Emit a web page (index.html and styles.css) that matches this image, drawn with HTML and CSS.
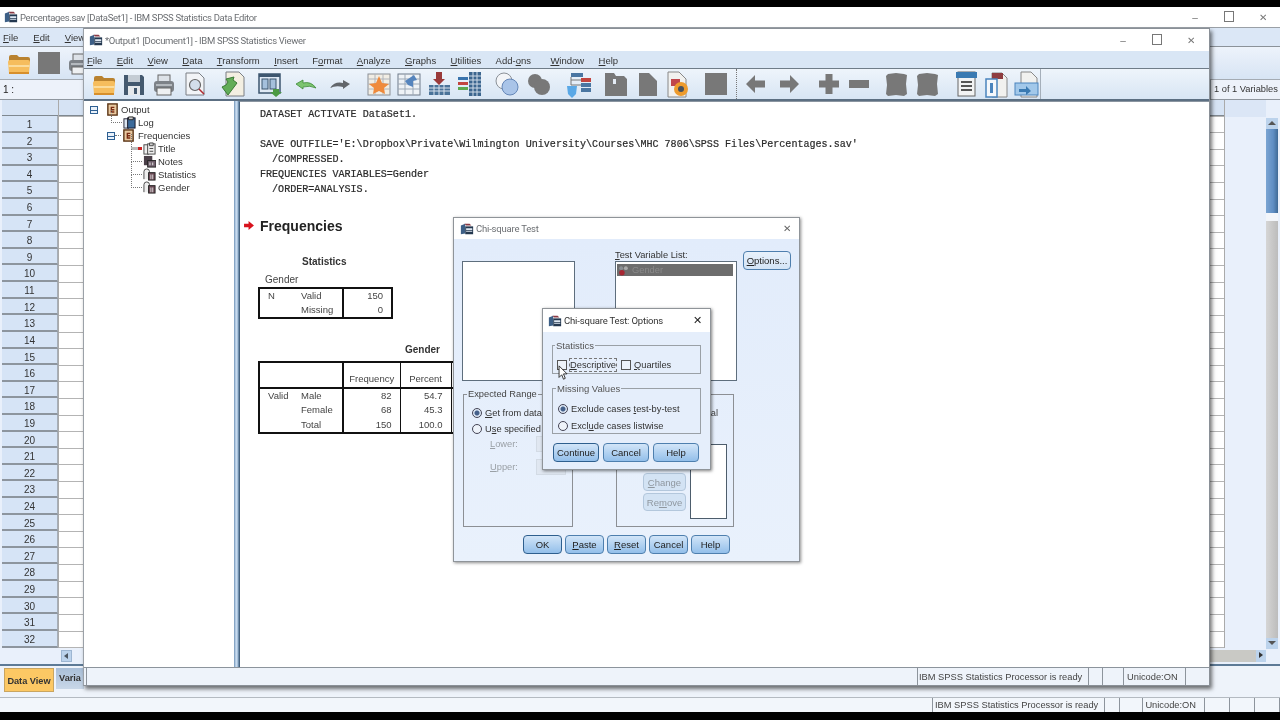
FILE: index.html
```html
<!DOCTYPE html>
<html lang="en">
<head>
<meta charset="utf-8">
<title>IBM SPSS Statistics</title>
<link rel="stylesheet" href="styles.css">
</head>
<body>
<svg class="sprite" xmlns="http://www.w3.org/2000/svg">
  <symbol id="app" viewBox="0 0 16 16"><path d="M1 4l5-2v11l-5 1z" fill="#3d5f86"/><path d="M5 2h6l2 2H7z" fill="#8a3b44"/><rect x="6" y="5" width="9" height="9" fill="#24384f"/><path d="M7 7h7v2H7zM7 10h7v1H7z" fill="#dfe8f3"/></symbol>
  <symbol id="folder" viewBox="0 0 30 30"><path d="M5 9q0-2 2-2h6l2 2h9q2 0 2 2v3H5z" fill="#b9822f"/><path d="M4 14q0-2 2-2h18q2 0 2 2l-1 11q0 1-2 1H7q-2 0-2-1z" fill="#f6bd5d"/><path d="M4.500 17h21v2h-21z" fill="#fbdc9c"/><path d="M5 24h20v2H5z" fill="#d78f2c"/></symbol>
  <symbol id="save" viewBox="0 0 30 30"><path d="M5 6h18l2 2v18H5z" fill="#44596f"/><rect x="9" y="6" width="12" height="7" fill="#c4ccd4"/><rect x="9" y="17" width="12" height="9" fill="#e6e9ec"/><rect x="15" y="19" width="3" height="6" fill="#44596f"/></symbol>
  <symbol id="print" viewBox="0 0 30 30"><rect x="9" y="6" width="12" height="8" fill="#dde2e8" stroke="#666"/><rect x="5" y="12" width="20" height="11" rx="3" fill="#7d8288"/><rect x="8" y="19" width="14" height="7" fill="#eef0f2" stroke="#666"/><path d="M7 15h16v2H7z" fill="#b4b9be"/></symbol>
  <symbol id="preview" viewBox="0 0 30 30"><path d="M6 4h13l5 5v17H6z" fill="#f2f4f7" stroke="#7a7f85"/><circle cx="15" cy="16" r="5.500" fill="#d3deea" stroke="#666" stroke-width="1.200"/><path d="M19 20l5 5" stroke="#b02a30" stroke-width="1.500"/></symbol>
  <symbol id="export" viewBox="0 0 30 30"><path d="M8 3h13l5 5v19H8z" fill="#f3efe2" stroke="#7a7f85"/><path d="M4 18l6 8 9-12-4-3 1-3-8 2 2 3-2 3z" fill="#62ad58" stroke="#3a7a36"/></symbol>
  <symbol id="window" viewBox="0 0 30 30"><rect x="4" y="5" width="21" height="19" fill="#dfe9f5" stroke="#3d566f" stroke-width="1.500"/><rect x="4" y="5" width="21" height="3" fill="#3d566f"/><rect x="7" y="10" width="6" height="10" fill="#a5c0dc" stroke="#3d566f"/><rect x="15" y="10" width="6" height="10" fill="#a5c0dc" stroke="#3d566f"/><path d="M18 20h6v3h3l-6 5-6-5h3z" fill="#4b9a44"/></symbol>
  <symbol id="undo" viewBox="0 0 30 30"><path d="M5 15l7-4v3q8-2 13 5-6-3-13-1v2z" fill="#7cc46f" stroke="#3d8a38" stroke-width=".8"/></symbol>
  <symbol id="redo" viewBox="0 0 30 30"><path d="M26 15l-7-4v3q-8-2-13 5 6-3 13-1v2z" fill="#62666b"/></symbol>
  <symbol id="chart" viewBox="0 0 30 30"><rect x="4" y="5" width="22" height="21" fill="#f1ede4" stroke="#8b8f95"/><path d="M4 10h22M4 15h22M4 20h22M11 5v21M19 5v21" stroke="#b0b4ba"/><path d="M15 7l3 7 7 1-5 4 1 6-6-3-6 3 1-6-5-4 7-1z" fill="#ef8a3c"/></symbol>
  <symbol id="grid" viewBox="0 0 30 30"><rect x="4" y="5" width="22" height="21" fill="#eef2f6" stroke="#6e7b8a"/><path d="M4 10h22M4 15h22M4 20h22M11 5v21M19 5v21" stroke="#9ca8b6"/><path d="M11 12l9-6 3 5-4 1v6l-5-2z" fill="#5584bd"/></symbol>
  <symbol id="insert" viewBox="0 0 30 30"><rect x="5" y="16" width="21" height="10" fill="#4a7399"/><path d="M5 19h21M5 22h21M10 16v10M15 16v10M20 16v10" stroke="#d9e3ee"/><path d="M12 3h6v7h3l-6 6-6-6h3z" fill="#9a3a3a"/></symbol>
  <symbol id="vars" viewBox="0 0 30 30"><rect x="14" y="3" width="12" height="24" fill="#3c668f"/><path d="M14 7h12M14 11h12M14 15h12M14 19h12M14 23h12M18 3v24M22 3v24" stroke="#cfdbe8"/><rect x="3" y="8" width="10" height="3" fill="#3a74ad"/><rect x="3" y="13" width="10" height="3" fill="#c2453f"/><rect x="3" y="18" width="10" height="3" fill="#5ca84e"/></symbol>
  <symbol id="circles" viewBox="0 0 30 30"><circle cx="12" cy="12" r="8" fill="#f3f5f8" stroke="#8b9198"/><circle cx="18" cy="18" r="8" fill="#a9c4e8" stroke="#6587b8"/></symbol>
  <symbol id="blob" viewBox="0 0 30 30"><circle cx="11" cy="12" r="7" fill="#787878"/><circle cx="18" cy="18" r="8" fill="#787878"/></symbol>
  <symbol id="split" viewBox="0 0 30 30"><path d="M8 4h12v4H8zM18 9h10v4H18zM18 14h10v4H18zM18 19h10v4H18z" fill="#4a76a2"/><path d="M18 9h10v4H18z" fill="#c2453f"/><path d="M4 17h10l-1 8-4 4-4-4z" fill="#5aa8e6"/><path d="M8 8v8M8 11h10M8 16h10" stroke="#777"/></symbol>
  <symbol id="gtag" viewBox="0 0 30 30"><path d="M5 4h9l2 3h8l3 3v17H5z" fill="#787878"/><path d="M13 10h3v5h-3z" fill="#e4ecf5"/></symbol>
  <symbol id="gpage" viewBox="0 0 30 30"><path d="M7 4h10l8 8v15H7z" fill="#787878"/></symbol>
  <symbol id="wpage" viewBox="0 0 30 30"><path d="M6 3h11l7 7v18H6z" fill="#f1f1ef" stroke="#888"/><rect x="9" y="10" width="9" height="7" fill="#c0464a"/><circle cx="19" cy="20" r="7" fill="#ed9b2d"/><circle cx="19" cy="20" r="3" fill="#46505c"/></symbol>
  <symbol id="gsq" viewBox="0 0 30 30"><rect x="4" y="4" width="22" height="22" fill="#787878"/></symbol>
  <symbol id="left" viewBox="0 0 30 30"><path d="M5 15l9-9v5.500h10v7H14V24z" fill="#787878"/></symbol>
  <symbol id="right" viewBox="0 0 30 30"><path d="M25 15l-9-9v5.500H6v7h10V24z" fill="#787878"/></symbol>
  <symbol id="plus" viewBox="0 0 30 30"><path d="M11.500 5h7v6.500H25v7h-6.500V25h-7v-6.500H5v-7h6.500z" fill="#787878"/></symbol>
  <symbol id="minus" viewBox="0 0 30 30"><rect x="5" y="11" width="20" height="8" fill="#787878"/></symbol>
  <symbol id="ragged" viewBox="0 0 30 30"><path d="M6 5l8-1 8 1 3 1-1 9 1 10-3 2-8-1-8 1-2-2 1-9-1-9z" fill="#787878"/></symbol>
  <symbol id="pagebar" viewBox="0 0 30 30"><rect x="7" y="3" width="17" height="24" fill="#f2f3f4" stroke="#666"/><rect x="5" y="3" width="21" height="6" fill="#3a7ab2"/><path d="M10 13h11M10 17h11M10 21h11" stroke="#555" stroke-width="2"/></symbol>
  <symbol id="pagered" viewBox="0 0 30 30"><path d="M11 4h10l5 5v19H11z" fill="#f1f1ef" stroke="#888"/><rect x="11" y="4" width="11" height="6" fill="#8e3c40"/><rect x="5" y="10" width="11" height="18" fill="#f4f7fb" stroke="#4a84bd" stroke-width="1.500"/><rect x="9" y="14" width="3" height="10" fill="#4a84bd"/></symbol>
  <symbol id="pageblue" viewBox="0 0 30 30"><path d="M10 3h10l6 6v19H10z" fill="#f1f1ef" stroke="#888"/><rect x="4" y="14" width="23" height="12" fill="#a2c8ea" stroke="#4a84bd"/><path d="M8 20h7v-3l5 5-5 4v-3H8z" fill="#3a7ab2"/></symbol>
  <symbol id="book" viewBox="0 0 14 14"><rect x="2" y="1" width="10" height="12" fill="#e9c9a0" stroke="#5a3314" stroke-width="1.500"/><path d="M5 4h4v1.500H6.500v1H9V8H6.500v1H9v1.500H5z" fill="#7a2b12"/></symbol>
  <symbol id="log" viewBox="0 0 14 14"><rect x="1" y="3" width="5" height="10" fill="#dde6f1" stroke="#223" /><rect x="5" y="2" width="8" height="11" fill="#3c6a9a" stroke="#112"/><path d="M6 1h5v3H6z" fill="#ccc" stroke="#222"/></symbol>
  <symbol id="titleic" viewBox="0 0 14 14"><rect x="1" y="3" width="5" height="10" fill="#eee" stroke="#444"/><rect x="5" y="2" width="8" height="11" fill="#eee" stroke="#444"/><path d="M7 1h4v3H7zM7 7h4M7 10h4" fill="#ccc" stroke="#444"/></symbol>
  <symbol id="notes" viewBox="0 0 14 14"><rect x="1" y="1" width="9" height="10" fill="#4a3f48"/><rect x="5" y="6" width="9" height="7" fill="#70606c" stroke="#222"/><path d="M7 8h1v3H7zM10 8h1v3h-1z" fill="#eee"/></symbol>
  <symbol id="stat" viewBox="0 0 14 14"><path d="M1 12V4q0-3 3-3t3 3v8" fill="#eee" stroke="#444"/><rect x="6" y="5" width="7" height="8" fill="#6b4a55" stroke="#222"/><path d="M8 7h1v5H8zM10 7h1v5h-1z" fill="#ddd"/></symbol>
  <symbol id="gend" viewBox="0 0 14 14"><circle cx="4" cy="4" r="2.500" fill="#8b8f94"/><circle cx="10" cy="4" r="2.500" fill="#aaa"/><circle cx="5" cy="10" r="3.500" fill="#a62632"/></symbol>
</svg>

<main class="desktop">

  <section class="win editor">
    <header class="titlebar tb-editor">
      <svg class="appicon"><use href="#app"/></svg>
      <span class="wintitle">Percentages.sav [DataSet1] - IBM SPSS Statistics Data Editor</span>
      <span class="ctrls"><span class="ctrl">&#8211;</span><span class="ctrl box"></span><span class="ctrl">&#10005;</span></span>
    </header>
    <nav class="menu ed-menu"><span><u>F</u>ile</span><span><u>E</u>dit</span><span><u>V</u>iew</span></nav>
    <div class="ed-tools">
      <svg class="ti"><use href="#folder"/></svg>
      <svg class="ti"><use href="#gsq"/></svg>
      <svg class="ti"><use href="#print"/></svg>
    </div>
    <div class="refbar"><span class="cellref">1 :</span><span class="varcount">1 of 1 Variables</span></div>
    <div class="sheet">
      <div class="rowheads">
        <div class="corner"></div>
        <div class="rn">1</div><div class="rn">2</div><div class="rn">3</div><div class="rn">4</div>
        <div class="rn">5</div><div class="rn">6</div><div class="rn">7</div><div class="rn">8</div>
        <div class="rn">9</div><div class="rn">10</div><div class="rn">11</div><div class="rn">12</div>
        <div class="rn">13</div><div class="rn">14</div><div class="rn">15</div><div class="rn">16</div>
        <div class="rn">17</div><div class="rn">18</div><div class="rn">19</div><div class="rn">20</div>
        <div class="rn">21</div><div class="rn">22</div><div class="rn">23</div><div class="rn">24</div>
        <div class="rn">25</div><div class="rn">26</div><div class="rn">27</div><div class="rn">28</div>
        <div class="rn">29</div><div class="rn">30</div><div class="rn">31</div><div class="rn">32</div>
      </div>
      <div class="cells"><div class="colhead"></div><div class="hscroll-l"><span class="arrow-l"></span></div></div>
      <div class="emptyarea"><div class="colhead plain"></div><div class="hscroll-r"><span class="arrow-r"></span></div></div>
      <div class="vscroll"><span class="vs-up"></span><span class="vs-track"></span><span class="vs-thumb"></span><span class="vs-down"></span></div>
    </div>
    <div class="tabs"><span class="tab on">Data View</span><span class="tab off">Varia</span></div>
    <footer class="status ed-status">
      <span class="st-a">IBM SPSS Statistics Processor is ready</span><span class="st-b"></span><span class="st-c"></span><span class="st-d">Unicode:ON</span><span class="st-e"></span><span class="st-e"></span><span class="st-e"></span>
    </footer>
  </section>

  <section class="win viewer">
    <header class="titlebar tb-viewer">
      <svg class="appicon"><use href="#app"/></svg>
      <span class="wintitle">*Output1 [Document1] - IBM SPSS Statistics Viewer</span>
      <span class="ctrls"><span class="ctrl">&#8211;</span><span class="ctrl box"></span><span class="ctrl">&#10005;</span></span>
    </header>
    <nav class="menu vw-menu">
      <span><u>F</u>ile</span><span><u>E</u>dit</span><span><u>V</u>iew</span><span><u>D</u>ata</span><span><u>T</u>ransform</span><span><u>I</u>nsert</span><span>F<u>o</u>rmat</span><span><u>A</u>nalyze</span><span><u>G</u>raphs</span><span><u>U</u>tilities</span><span>Add-<u>o</u>ns</span><span class="m-win"><u>W</u>indow</span><span><u>H</u>elp</span>
    </nav>
    <div class="toolbar">
      <svg class="ti"><use href="#folder"/></svg>
      <svg class="ti"><use href="#save"/></svg>
      <svg class="ti"><use href="#print"/></svg>
      <svg class="ti g1"><use href="#preview"/></svg>
      <svg class="ti g8"><use href="#export"/></svg>
      <svg class="ti g7"><use href="#window"/></svg>
      <svg class="ti g6"><use href="#undo"/></svg>
      <svg class="ti g3"><use href="#redo"/></svg>
      <svg class="ti g10"><use href="#chart"/></svg>
      <svg class="ti"><use href="#grid"/></svg>
      <svg class="ti"><use href="#insert"/></svg>
      <svg class="ti g1"><use href="#vars"/></svg>
      <svg class="ti g7"><use href="#circles"/></svg>
      <svg class="ti g2"><use href="#blob"/></svg>
      <svg class="ti g9"><use href="#split"/></svg>
      <svg class="ti g7"><use href="#gtag"/></svg>
      <svg class="ti g2"><use href="#gpage"/></svg>
      <svg class="ti"><use href="#wpage"/></svg>
      <svg class="ti g9"><use href="#gsq"/></svg>
      <span class="tsep"></span>
      <svg class="ti g5"><use href="#left"/></svg>
      <svg class="ti g3"><use href="#right"/></svg>
      <svg class="ti g10"><use href="#plus"/></svg>
      <svg class="ti"><use href="#minus"/></svg>
      <svg class="ti g8"><use href="#ragged"/></svg>
      <svg class="ti g1"><use href="#ragged"/></svg>
      <svg class="ti g8"><use href="#pagebar"/></svg>
      <svg class="ti"><use href="#pagered"/></svg>
      <svg class="ti"><use href="#pageblue"/></svg>
      <span class="tend"></span>
    </div>
    <div class="vw-body">
      <aside class="outline">
        <div class="node n0"><span class="exp"></span><svg class="ni"><use href="#book"/></svg>Output</div>
        <div class="node n1"><span class="dash"></span><svg class="ni"><use href="#log"/></svg>Log</div>
        <div class="node n1b"><span class="exp"></span><span class="dash short"></span><svg class="ni"><use href="#book"/></svg>Frequencies</div>
        <div class="node n2"><span class="dash redmark"></span><svg class="ni"><use href="#titleic"/></svg>Title</div>
        <div class="node n2"><span class="dash"></span><svg class="ni"><use href="#notes"/></svg>Notes</div>
        <div class="node n2"><span class="dash"></span><svg class="ni"><use href="#stat"/></svg>Statistics</div>
        <div class="node n2"><span class="dash"></span><svg class="ni"><use href="#stat"/></svg>Gender</div>
      </aside>
      <div class="splitter"></div>
      <article class="doc">
        <pre class="syntax">DATASET ACTIVATE DataSet1.

SAVE OUTFILE='E:\Dropbox\Private\Wilmington University\Courses\MHC 7806\SPSS Files\Percentages.sav'
  /COMPRESSED.
FREQUENCIES VARIABLES=Gender
  /ORDER=ANALYSIS.</pre>
        <h1 class="heading"><svg class="redarrow" viewBox="0 0 11 10"><path d="M0 3h5V0l6 5-6 5V7H0z" fill="#d8121d"/></svg>Frequencies</h1>
        <div class="tcap stat-cap">Statistics</div>
        <div class="tsub">Gender</div>
        <table class="pivot stats">
          <tr><td class="c-n">N</td><td class="c-l">Valid</td><td class="c-v">150</td></tr>
          <tr><td></td><td class="c-l">Missing</td><td class="c-v">0</td></tr>
        </table>
        <div class="tcap gender-cap">Gender</div>
        <table class="pivot freq">
          <tr class="hd"><th class="f1"></th><th class="f2"></th><th class="f3">Frequency</th><th class="f4">Percent</th><th class="f5"></th><th class="f6"></th></tr>
          <tr><td class="f1">Valid</td><td class="f2">Male</td><td class="f3 num">82</td><td class="f4 num">54.7</td><td class="f5"></td><td class="f6"></td></tr>
          <tr><td class="f1"></td><td class="f2">Female</td><td class="f3 num">68</td><td class="f4 num">45.3</td><td class="f5"></td><td class="f6"></td></tr>
          <tr><td class="f1"></td><td class="f2">Total</td><td class="f3 num">150</td><td class="f4 num">100.0</td><td class="f5"></td><td class="f6"></td></tr>
        </table>
      </article>
    </div>
    <footer class="status vw-status">
      <span class="st-fill"></span><span class="vs-a">IBM SPSS Statistics Processor is ready</span><span class="vs-b"></span><span class="vs-c"></span><span class="vs-d">Unicode:ON</span><span class="vs-e"></span>
    </footer>
  </section>

  <section class="win dlg chi">
    <header class="dlg-title">
      <svg class="appicon"><use href="#app"/></svg>
      <span class="wintitle">Chi-square Test</span>
      <span class="dlg-x">&#10005;</span>
    </header>
    <div class="chi-body">
      <div class="chi-top">
        <div class="srclist"></div>
        <div class="testcol">
          <div class="lbl"><u>T</u>est Variable List:</div>
          <div class="testlist"><div class="selrow"><svg class="ni"><use href="#gend"/></svg>Gender</div></div>
        </div>
        <button class="btn opt" type="button"><u>O</u>ptions...</button>
      </div>
      <div class="chi-mid">
        <div class="grp g-range">
          <span class="g-lbl">Expected Range</span>
          <div class="rad"><span class="radio on"></span><u>G</u>et from data</div>
          <div class="rad"><span class="radio"></span>U<u>s</u>e specified range</div>
          <div class="dimrow r-low"><span><u>L</u>ower:</span><span class="dimbox"></span></div>
          <div class="dimrow r-up"><span><u>U</u>pper:</span><span class="dimbox"></span></div>
        </div>
        <div class="grp g-values">
          <div class="rad all"><span class="tail">al</span></div>
          <div class="v-row">
            <div class="vcol">
              <button class="btn dim" type="button"><u>C</u>hange</button>
              <button class="btn dim" type="button">Re<u>m</u>ove</button>
            </div>
            <div class="vlist"></div>
          </div>
        </div>
      </div>
      <div class="chi-btns">
        <button class="btn b-ok" type="button">OK</button>
        <button class="btn b-m" type="button"><u>P</u>aste</button>
        <button class="btn b-m" type="button"><u>R</u>eset</button>
        <button class="btn b-m" type="button">Cancel</button>
        <button class="btn b-m" type="button">Help</button>
      </div>
    </div>
  </section>

  <section class="win dlg opts">
    <header class="dlg-title op-title">
      <svg class="appicon"><use href="#app"/></svg>
      <span class="wintitle">Chi-square Test: Options</span>
      <span class="dlg-x dark">&#10005;</span>
    </header>
    <div class="op-body">
      <fieldset class="fs fs-stat">
        <legend>Statistics</legend>
        <span class="chk"></span><span class="focus"><u>D</u>escriptive</span>
        <span class="chk c2"></span><span><u>Q</u>uartiles</span>
      </fieldset>
      <fieldset class="fs fs-miss">
        <legend>Missing Values</legend>
        <div class="rad op"><span class="radio on"></span>Exclude cases <u>t</u>est-by-test</div>
        <div class="rad op"><span class="radio"></span>Excl<u>u</u>de cases listwise</div>
      </fieldset>
      <div class="op-btns">
        <button class="btn b-cont" type="button">Continue</button>
        <button class="btn b-op" type="button">Cancel</button>
        <button class="btn b-op" type="button">Help</button>
      </div>
    </div>
  </section>

  <svg class="cursor" viewBox="0 0 12 18"><path d="M1 1v13l3-3 2 5 2-1-2-5h4z" fill="#fff" stroke="#222" stroke-width="1"/></svg>
</main>
</body>
</html>
```

FILE: styles.css
```css
* { box-sizing: border-box; }
html, body { margin: 0; padding: 0; background: #000; }
body { width: 1280px; height: 720px; overflow: hidden; font-family: "Liberation Sans", Arial, sans-serif; font-size: 9.500px; color: #222; }
.sprite { position: absolute; width: 0; height: 0; }
.desktop { position: relative; width: 1280px; height: 720px; overflow: hidden; filter: blur(.4px); }
u { text-decoration-thickness: 1px; text-underline-offset: 1px; }

.win { position: absolute; display: flex; flex-direction: column; }
.editor { left: 0; top: 7px; width: 1280px; height: 705px; background: #f1f5fb; }
.viewer { left: 83px; top: 28px; width: 1127px; height: 658px; background: #e6eef9; border: 1px solid #8a9097; border-left-color: #9ba1a8; box-shadow: 2px 3px 4px rgba(0,0,0,.55); }
.chi { left: 453px; top: 217px; width: 347px; height: 345px; background: #e5eefb; border: 1px solid #8f9499; box-shadow: 1px 1px 3px rgba(0,0,0,.45); }
.opts { left: 542px; top: 308px; width: 169px; height: 162px; background: #e5eefb; border: 1px solid #8f9499; box-shadow: 1px 1px 3px rgba(0,0,0,.5); }
.cursor { position: absolute; left: 558px; top: 365px; width: 11px; height: 16px; }

.titlebar { display: flex; align-items: center; background: #fff; flex: none; }
.tb-editor { height: 21px; padding-left: 4px; border-bottom: 1px solid #9aa0a6; }
.tb-viewer { height: 22px; padding-left: 5px; }
.appicon { width: 14px; height: 14px; flex: none; margin-right: 2px; }
.wintitle { font-family: Roboto, "Noto Sans", sans-serif; font-size: 9.500px; letter-spacing: -.33px; color: #6c6f73; white-space: nowrap; }
.ctrls { margin-left: auto; display: flex; align-items: center; color: #777; font-size: 10px; }
.ctrl { width: 34px; text-align: center; }
.ctrl.box::before { content: ""; display: inline-block; width: 8px; height: 9px; border: 1px solid #777; }
.tb-viewer .ctrls { padding-right: 1px; }

.menu { display: flex; align-items: center; gap: 14.400px; font-size: 9.500px; color: #333; white-space: nowrap; flex: none; padding-top: 1px; }
.ed-menu { height: 19px; padding-left: 3px; background: #dbe7f6; gap: 15px; border-bottom: 1px solid #8b9299; }
.vw-menu { height: 18px; padding-left: 3px; background: #d9e6f5; border-bottom: 1px solid #6f7c88; }
.m-win { margin-left: 5px; }

.ed-tools { height: 33px; display: flex; align-items: center; padding-left: 4px; background: linear-gradient(#edf3fb,#d7e4f4); flex: none; border-bottom: 1px solid #a4abb3; }
.refbar { height: 20px; display: flex; align-items: center; justify-content: space-between; background: #edf2fa; border-bottom: 1px solid #8f969e; flex: none; font-size: 10px; }
.cellref { padding-left: 3px; }
.varcount { width: 70px; height: 100%; padding-left: 3px; line-height: 19px; border-left: 1px solid #9aa2ab; font-size: 9.300px; color: #333; white-space: nowrap; }

.sheet { display: flex; height: 566px; flex: none; background: #e9f0fb; border-bottom: 2px solid #5d7a96; }
.rowheads { width: 58px; padding-left: 2px; flex: none; }
.corner { height: 16px; background: #d6e3f4; border-bottom: 1px solid #7f8890; }
.rn { height: 16.610px; line-height: 17px; text-align: center; background: #d6e4f6; border-bottom: 2px solid #8d959e; border-right: 1px solid #a6aeb8; font-size: 10px; color: #333; }
.cells { width: 1167px; height: 548px; flex: none; background: repeating-linear-gradient(#fff 0, #fff 15.610px, #b4b4b4 15.610px, #b4b4b4 16.610px); border-right: 1px solid #aaa; border-left: 1px solid #aaa; position: relative; }
.colhead { height: 16px; background: #d6e3f4; border-bottom: 1px solid #7f8890; }
.colhead.plain { height: 17px; background: #dbe6f6; border-bottom: 0; }
.hscroll-l { position: absolute; left: 0; top: 550px; width: 25px; height: 12px; display: flex; }
.arrow-l { width: 11px; height: 12px; background: #bcd3ec; border: 1px solid #9db6d2; position: relative; margin-left: 2px; }
.arrow-l::after { content: ""; position: absolute; left: 2px; top: 2px; border: 3.500px solid transparent; border-right: 4px solid #4b5560; border-left: 0; }
.emptyarea { width: 41px; flex: none; position: relative; background: #e9f0fb; }
.hscroll-r { position: absolute; left: -15px; top: 550px; width: 56px; height: 12px; background: #c9c9c5; display: flex; justify-content: flex-end; }
.arrow-r { width: 10px; height: 12px; background: #bcd3ec; position: relative; }
.arrow-r::after { content: ""; position: absolute; left: 3px; top: 2px; border: 3.500px solid transparent; border-left: 4px solid #333; border-right: 0; }
.vscroll { width: 12px; padding-top: 18px; display: flex; flex-direction: column; flex: none; }
.vs-up, .vs-down { display: block; height: 11px; background: #bcd3ec; flex: none; position: relative; }
.vs-up::after, .vs-down::after { content: ""; position: absolute; left: 2px; top: 3px; border: 4px solid transparent; border-top: 0; border-bottom: 4px solid #555; }
.vs-down::after { border-bottom: 0; border-top: 4px solid #555; }
.vs-track { display: block; height: 84px; background: linear-gradient(90deg,#7aa4d2,#5f8ec4 60%,#3f6a96); }
.vs-thumb { display: block; height: 425px; background: linear-gradient(90deg,#d5d5d5,#bcbcbc); border-top: 8px solid #f2f5fa; }

.tabs { height: 32px; display: flex; align-items: flex-start; gap: 2px; padding-left: 4px; padding-top: 2px; flex: none; background: #eef3fa; border-bottom: 1px solid #b4bac1; }
.tab { text-align: center; font-weight: bold; font-size: 9.200px; color: #333; white-space: nowrap; }
.tab.on { width: 50px; height: 24px; line-height: 24px; background: #fcc864; border: 1px solid #c9a560; }
.tab.off { width: 28px; height: 21px; line-height: 20px; background: linear-gradient(#a9bfd8,#c9d7e8); overflow: hidden; }

.status { display: flex; align-items: center; flex: none; font-size: 9.300px; color: #444; }
.status span { height: 100%; border-right: 1px solid #8d949c; white-space: nowrap; }
.ed-status { height: 14px; line-height: 14px; padding-left: 932px; background: #f2f6fb; }
.st-a { width: 173px; padding-left: 2px; border-left: 1px solid #8d949c; }
.st-b { width: 16px; }
.st-c { width: 23px; }
.st-d { width: 62px; padding-left: 2px; }
.st-e { width: 25px; }

.toolbar { height: 32px; display: flex; align-items: center; padding-left: 5px; background: linear-gradient(#eef4fb,#d8e5f4); border-bottom: 2px solid #5c6f82; flex: none; }
.ti { width: 30px; height: 30px; flex: none; }
.g1 { margin-left: 1px; } .g2 { margin-left: 2px; } .g3 { margin-left: 3px; } .g5 { margin-left: 4px; }
.g6 { margin-left: 6px; } .g7 { margin-left: 7px; } .g8 { margin-left: 8px; } .g9 { margin-left: 9px; } .g10 { margin-left: 10px; }
.tsep { width: 1px; height: 30px; margin-left: 5px; border-left: 1px dotted #777; flex: none; }
.tend { width: 0; height: 100%; margin-left: -1px; border-right: 1px solid #a5afba; flex: none; }

.vw-body { flex: 1; display: flex; min-height: 0; background: #fff; }
.outline { width: 150px; flex: none; padding-top: 2px; background: #fff; font-size: 9.500px; color: #333; }
.node { height: 13px; display: flex; align-items: center; white-space: nowrap; }
.exp { width: 8px; height: 8px; border: 1px solid #2d5f92; background: linear-gradient(#e9f1fa 3px,#2d5f92 3px,#2d5f92 4px,#e9f1fa 4px); flex: none; position: relative; z-index: 1; }
.ni { width: 13px; height: 13px; flex: none; margin-right: 2px; }
.n0 { padding-left: 6px; }
.n0 .ni { margin-left: 8px; margin-right: 2px; }
.n1 { padding-left: 27px; }
.n1b { padding-left: 23px; }
.n1b .ni { margin-right: 3px; }
.n2 { padding-left: 47px; }
.dash { width: 11px; height: 1px; border-top: 1px dotted #777; flex: none; margin-right: 1px; position: relative; }
.dash::before { content: ""; position: absolute; left: 0; top: -13px; height: 13px; border-left: 1px dotted #777; }
.dash.short { width: 6px; }
.dash.short::before { display: none; }
.dash.redmark { height: 3px; border-top: 0; background: linear-gradient(90deg,#bbb 60%,#c22 60%); }

.splitter { width: 5px; flex: none; background: linear-gradient(90deg,#6f92b6,#c7dbf0 40%,#c7dbf0 60%,#547799); }
.doc { flex: 1; min-width: 0; padding-left: 20px; position: relative; background: #fff; overflow: hidden; border-top: 1px solid #8a95a0; border-left: 1px solid #46627e; }
.syntax { margin: 0; padding-top: 5px; font-family: "Liberation Mono", "Courier New", monospace; font-size: 10.070px; line-height: 15px; color: #2a2a2a; -webkit-text-stroke: .2px #2a2a2a; }
.heading { position: relative; margin: 20px 0 0; font-size: 14px; line-height: 18px; font-weight: bold; color: #222; }
.redarrow { position: absolute; left: -16px; top: 4px; width: 10px; height: 9px; }
.tcap { font-weight: bold; font-size: 10px; color: #333; }
.stat-cap { margin-top: 21px; margin-left: 42px; line-height: 12px; }
.tsub { margin-top: 6px; margin-left: 5px; line-height: 12px; font-size: 10px; color: #444; }
.pivot { border-collapse: collapse; border: 2px solid #111; font-size: 9.500px; color: #444; }
.pivot td, .pivot th { padding: 0; font-weight: normal; }
.stats { margin-top: 1px; width: 135px; height: 31px; margin-left: -2px; }
.stats tr { height: 15px; }
.stats td { vertical-align: top; line-height: 13px; }
.c-n { width: 42px; padding-left: 8px !important; }
.c-l { width: 42px; border-right: 2px solid #111; }
.c-v { text-align: right; padding-right: 8px !important; }
.gender-cap { margin-top: 25px; margin-left: 145px; line-height: 12px; }
.freq { margin-top: 5px; margin-left: -2px; width: 280px; table-layout: fixed; }
.freq .hd th { height: 26px; vertical-align: bottom; padding-bottom: 3px; border-bottom: 2px solid #111; }
.freq td { height: 15px; vertical-align: top; line-height: 11px; padding-top: 1px; }
.f1 { width: 42px; padding-left: 8px !important; }
.f2 { width: 42px; border-right: 2px solid #111; }
.f3 { width: 57px; border-right: 1px solid #111; }
.f4 { width: 51px; border-right: 1px solid #111; }
.f5 { width: 50px; }
.num { text-align: right; padding-right: 8px !important; }

.dlg-title { height: 21px; display: flex; align-items: center; padding-left: 6px; background: #fff; flex: none; }
.chi .wintitle { letter-spacing: -.2px; }
.dlg-x { margin-left: auto; margin-right: 8px; font-size: 10px; color: #666; }
.dlg-x.dark { color: #222; font-size: 11px; }
.chi-body { flex: 1; padding: 12px 8px 0 8px; background: linear-gradient(#e2ecfb,#e9f1fc); font-size: 9.300px; }
.chi-top { display: flex; height: 130px; }
.srclist { width: 113px; height: 120px; margin-top: 10px; background: #fff; border: 1px solid #5e6e7d; flex: none; }
.testcol { margin-left: 40px; width: 122px; flex: none; }
.lbl { height: 10px; line-height: 8px; white-space: nowrap; color: #333; }
.testlist { height: 120px; background: #fff; border: 1px solid #5e6e7d; padding: 2px 3px 0 1px; }
.selrow { height: 12px; background: #6d6d6d; color: #8a8a8a; display: flex; align-items: center; }
.selrow .ni { width: 11px; height: 11px; margin: 0 3px 0 1px; }
.opt { width: 48px; height: 18px; margin-left: 6px; padding: 0; flex: none; }

.btn { font-family: "Liberation Sans", Arial, sans-serif; font-size: 9.500px; color: #222; height: 19px; border: 1px solid #4e7fae; border-radius: 4px; background: linear-gradient(#d2e5f8,#93bfea); padding: 0; }
.btn.opt { background: linear-gradient(#e8f1fb,#d3e4f6); }
.chi-mid { display: flex; margin-top: 13px; height: 133px; }
.grp { border: 1px solid #8c8f94; position: relative; flex: none; }
.g-range { width: 110px; margin-left: 1px; padding: 10px 0 0 8px; }
.g-lbl { position: absolute; left: 3px; top: -6px; padding: 0 1px; background: #e5eefb; color: #444; line-height: 11px; white-space: nowrap; }
.rad { display: flex; align-items: center; height: 16px; color: #333; white-space: pre; }
.g-range .rad { overflow: hidden; }
.radio { width: 10px; height: 10px; border-radius: 50%; border: 1px solid #445; background: #eef3fa; margin-right: 3px; flex: none; }
.radio.on { background: radial-gradient(#44608a 0 2px,#dbe6f4 3px); }
.dimrow { margin-left: 18px; width: 76px; height: 16px; display: flex; align-items: center; justify-content: space-between; color: #9aa0a6; }
.dimbox { width: 30px; height: 16px; background: #e0e7f1; border: 1px solid #d3dbe5; }
.r-low { margin-top: -1px; }
.r-up { margin-top: 7px; }
.g-values { width: 118px; margin-left: 43px; padding: 10px 6px 7px 7px; }
.rad.all { justify-content: flex-end; padding-right: 9px; }
.tail { color: #444; }
.v-row { display: flex; padding: 23px 0 0 19px; }
.vcol { width: 43px; padding-top: 29px; display: flex; flex-direction: column; gap: 2px; flex: none; }
.btn.dim { height: 18px; color: #8f979f; background: #d3e3f4; border-color: #b3c7dc; width: 43px; }
.vlist { width: 37px; height: 75px; margin-left: 4px; flex: none; background: #fff; border: 1px solid #4d5d6c; }
.chi-btns { display: flex; gap: 3px; margin-top: 8px; padding-left: 61px; }
.b-ok { width: 39px; border: 1.500px solid #2e5f8e; }
.b-m { width: 39px; }

.op-title { height: 23px; padding-left: 5px; }
.op-title .wintitle { color: #333; letter-spacing: -.17px; }
.op-body { flex: 1; padding: 8px 9px 0; background: #e5eefb; color: #333; font-size: 9.300px; }
.fs { margin: 0; padding: 0 0 0 4px; border: 1px solid #9aa0a6; min-width: 0; width: 149px; }
.fs legend { padding: 0 1px; margin-left: -2px; line-height: 11px; font-size: 9.500px; color: #555; }
.fs-stat { height: 34px; display: flex; align-items: center; white-space: nowrap; padding-top: 6px; }
.chk { display: inline-block; width: 10px; height: 10px; background: #eef3fa; border: 1px solid #555; flex: none; }
.focus { margin: 0 3px 0 2px; border: 1px dashed #777; padding: 1px 0; }
.c2 { margin-right: 3px; margin-left: 1px; }
.fs-miss { margin-top: 9px; height: 51px; padding-left: 5px; padding-top: 6px; }
.rad.op { height: 17px; }
.op-btns { display: flex; gap: 4px; margin-top: 9px; padding-left: 1px; }
.b-cont { width: 46px; border: 1.500px solid #2e5f8e; }
.b-op { width: 46px; }

.vw-status { height: 18px; line-height: 18px; background: #eef3fa; border-top: 1px solid #8c949c; }
.vw-status .st-fill { width: 832px; margin-left: 2px; border-left: 1px solid #8d949c; border-right: 1px solid #8d949c; }
.vs-a { width: 171px; padding-left: 1px; }
.vs-b { width: 14px; }
.vs-c { width: 21px; }
.vs-d { width: 62px; padding-left: 3px; }
.vs-e { flex: 1; border-right: 0 !important; }
```
